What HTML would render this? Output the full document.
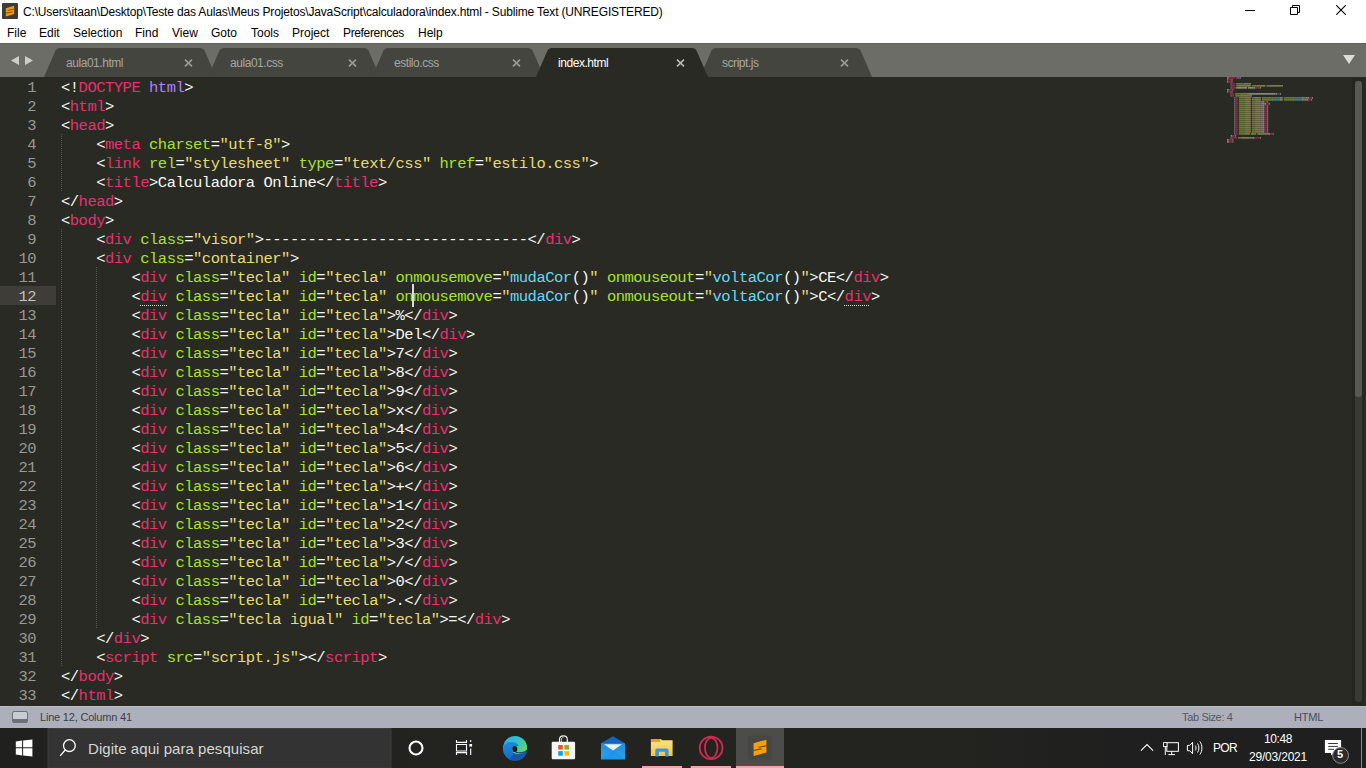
<!DOCTYPE html>
<html><head><meta charset="utf-8">
<style>
*{margin:0;padding:0;box-sizing:border-box}
html,body{width:1366px;height:768px;overflow:hidden;background:#fff;font-family:"Liberation Sans",sans-serif}
.abs{position:absolute}
#title{position:absolute;left:0;top:0;width:1366px;height:22px;background:#fff}
#title .txt{position:absolute;left:23px;top:5px;font-size:12px;letter-spacing:-0.165px;color:#000;white-space:nowrap}
#menu{position:absolute;left:0;top:22px;width:1366px;height:21px;background:#fff}
#menu span{position:absolute;top:4px;font-size:12px;color:#000;white-space:nowrap}
#tabbar{position:absolute;left:0;top:43px;width:1366px;height:34px;background:#6d6d68;border-top:1px solid #5f5f5a}
.tab{position:absolute;top:4px;height:29px;width:172px}
.tab svg{position:absolute;left:0;top:0}
.tab .nm{position:absolute;left:22px;top:8px;font-size:12px;letter-spacing:-0.45px;color:#a6a6a0;white-space:nowrap}
.tab .x{position:absolute;left:140px;top:11px}
#editor{position:absolute;left:0;top:77px;width:1366px;height:629px;background:#292a24;overflow:hidden}
#gutter{position:absolute;left:0;top:0;width:56px}
#gutter div{height:19px;line-height:23px;text-align:right;padding-right:20px;font-family:"Liberation Mono",monospace;font-size:15.5px;letter-spacing:-0.5px;color:#999992}
#gutter div.cur{background:#3e3d38;color:#c2c2bc}
#code{position:absolute;left:61px;top:0;font-family:"Liberation Mono",monospace;font-size:15.5px;letter-spacing:-0.5px;color:#f8f8f2;white-space:pre}
.ln{height:19px;line-height:23px}
i{font-style:normal}
.t{color:#e6316e}.a{color:#a6e22e}.s{color:#e6db74}.f{color:#66d9ef}.k{color:#ae81ff}
.guide{position:absolute;width:1px;background-image:linear-gradient(#55564f 50%,transparent 50%);background-size:1px 2px}
#status{position:absolute;left:0;top:706px;width:1366px;height:22px;background:#adafba;border-top:1px solid #babcc2}
#status span{position:absolute;top:4px;font-size:11px;color:#3d3f47;white-space:nowrap}
#taskbar{position:absolute;left:0;top:728px;width:1366px;height:40px;background:linear-gradient(90deg,#20201e 0%,#23241f 35%,#23241f 70%,#1f1f1f 82%)}
#taskbar .lbl{position:absolute;color:#fff;white-space:nowrap}
</style></head><body>
<div id="title">
  <svg class="abs" style="left:2px;top:3px" width="16" height="16" viewBox="0 0 16 16"><rect width="16" height="16" rx="1" fill="#3b3b3b"/><path d="M3.9 5.3L12.2 2.7V11L3.9 13.5Z" fill="#f79a0e"/><path d="M5.6 7.3L12.3 6.1 M3.8 10.1L10.5 8.9" stroke="#6b4a10" stroke-width="0.9"/></svg>
  <div class="txt">C:\Users\itaan\Desktop\Teste das Aulas\Meus Projetos\JavaScript\calculadora\index.html - Sublime Text (UNREGISTERED)</div>
  <svg class="abs" style="left:1245px;top:10px" width="10" height="2"><rect width="10" height="1" fill="#000"/></svg>
  <svg class="abs" style="left:1290px;top:5px" width="10" height="10" viewBox="0 0 10 10"><path d="M0.5 2.5h7v7h-7z M2.5 2.5v-2h7v7h-2" fill="none" stroke="#000" stroke-width="1"/></svg>
  <svg class="abs" style="left:1336px;top:5px" width="10" height="10" viewBox="0 0 10 10"><path d="M0.3 0.3L9.7 9.7M9.7 0.3L0.3 9.7" stroke="#000" stroke-width="1.1"/></svg>
</div>
<div id="menu">
<span style="left:7px">File</span><span style="left:39px">Edit</span><span style="left:73px">Selection</span><span style="left:135px">Find</span><span style="left:172px">View</span><span style="left:211px">Goto</span><span style="left:251px">Tools</span><span style="left:292px">Project</span><span style="left:343px;letter-spacing:-0.35px">Preferences</span><span style="left:418px">Help</span>
</div>
<div id="tabbar">
  <svg class="abs" style="left:11px;top:12px" width="22" height="9" viewBox="0 0 22 9"><path d="M0 4.5L8 0V9Z M14 0L22 4.5L14 9Z" fill="#cfcfca"/></svg>
  <div class="tab" style="left:44px"><svg width="172" height="29" viewBox="0 0 172 29"><path d="M0 29 L11.5 2.5 Q12.6 0 15.5 0 H156.5 Q159.4 0 160.5 2.5 L172 29Z" fill="#45453f"/></svg><div class="nm" style="color:#a6a6a0">aula01.html</div><svg class="x" width="9" height="8" viewBox="0 0 9 8"><path d="M1 0.6L8 7.4M8 0.6L1 7.4" stroke="#9c9c96" stroke-width="1.6"/></svg></div>
<div class="tab" style="left:208px"><svg width="172" height="29" viewBox="0 0 172 29"><path d="M0 29 L11.5 2.5 Q12.6 0 15.5 0 H156.5 Q159.4 0 160.5 2.5 L172 29Z" fill="#45453f"/></svg><div class="nm" style="color:#a6a6a0">aula01.css</div><svg class="x" width="9" height="8" viewBox="0 0 9 8"><path d="M1 0.6L8 7.4M8 0.6L1 7.4" stroke="#9c9c96" stroke-width="1.6"/></svg></div>
<div class="tab" style="left:372px"><svg width="172" height="29" viewBox="0 0 172 29"><path d="M0 29 L11.5 2.5 Q12.6 0 15.5 0 H156.5 Q159.4 0 160.5 2.5 L172 29Z" fill="#45453f"/></svg><div class="nm" style="color:#a6a6a0">estilo.css</div><svg class="x" width="9" height="8" viewBox="0 0 9 8"><path d="M1 0.6L8 7.4M8 0.6L1 7.4" stroke="#9c9c96" stroke-width="1.6"/></svg></div>
<div class="tab" style="left:700px"><svg width="172" height="29" viewBox="0 0 172 29"><path d="M0 29 L11.5 2.5 Q12.6 0 15.5 0 H156.5 Q159.4 0 160.5 2.5 L172 29Z" fill="#45453f"/></svg><div class="nm" style="color:#a6a6a0">script.js</div><svg class="x" width="9" height="8" viewBox="0 0 9 8"><path d="M1 0.6L8 7.4M8 0.6L1 7.4" stroke="#9c9c96" stroke-width="1.6"/></svg></div>
<div class="tab" style="left:536px"><svg width="172" height="29" viewBox="0 0 172 29"><path d="M0 29 L11.5 2.5 Q12.6 0 15.5 0 H156.5 Q159.4 0 160.5 2.5 L172 29Z" fill="#292a24"/></svg><div class="nm" style="color:#ffffff">index.html</div><svg class="x" width="9" height="8" viewBox="0 0 9 8"><path d="M1 0.6L8 7.4M8 0.6L1 7.4" stroke="#b9b9b3" stroke-width="1.6"/></svg></div>
  <svg class="abs" style="left:1343px;top:11px" width="12" height="9" viewBox="0 0 12 9"><path d="M0 0H12L6 9Z" fill="#dcdcd8"/></svg>
</div>
<div id="editor">
  <div id="gutter"><div>1</div><div>2</div><div>3</div><div>4</div><div>5</div><div>6</div><div>7</div><div>8</div><div>9</div><div>10</div><div>11</div><div class="cur">12</div><div>13</div><div>14</div><div>15</div><div>16</div><div>17</div><div>18</div><div>19</div><div>20</div><div>21</div><div>22</div><div>23</div><div>24</div><div>25</div><div>26</div><div>27</div><div>28</div><div>29</div><div>30</div><div>31</div><div>32</div><div>33</div></div>
  <div class="guide" style="left:61px;top:57px;height:57px"></div><div class="guide" style="left:61px;top:152px;height:437px"></div><div class="guide" style="left:96px;top:190px;height:361px"></div>
  <div id="code"><div class="ln">&lt;!<i class="t">DOCTYPE</i> <i class="k">html</i>&gt;</div><div class="ln">&lt;<i class="t">html</i>&gt;</div><div class="ln">&lt;<i class="t">head</i>&gt;</div><div class="ln">    &lt;<i class="t">meta</i> <i class="a">charset</i>=<i class="s">"utf-8"</i>&gt;</div><div class="ln">    &lt;<i class="t">link</i> <i class="a">rel</i>=<i class="s">"stylesheet"</i> <i class="a">type</i>=<i class="s">"text/css"</i> <i class="a">href</i>=<i class="s">"estilo.css"</i>&gt;</div><div class="ln">    &lt;<i class="t">title</i>&gt;Calculadora Online&lt;/<i class="t">title</i>&gt;</div><div class="ln">&lt;/<i class="t">head</i>&gt;</div><div class="ln">&lt;<i class="t">body</i>&gt;</div><div class="ln">    &lt;<i class="t">div</i> <i class="a">class</i>=<i class="s">"visor"</i>&gt;------------------------------&lt;/<i class="t">div</i>&gt;</div><div class="ln">    &lt;<i class="t">div</i> <i class="a">class</i>=<i class="s">"container"</i>&gt;</div><div class="ln">        &lt;<i class="t">div</i> <i class="a">class</i>=<i class="s">"tecla"</i> <i class="a">id</i>=<i class="s">"tecla"</i> <i class="a">onmousemove</i>=<i class="s">"</i><i class="f">mudaCor</i>()<i class="s">"</i> <i class="a">onmouseout</i>=<i class="s">"</i><i class="f">voltaCor</i>()<i class="s">"</i>&gt;CE&lt;/<i class="t">div</i>&gt;</div><div class="ln">        &lt;<i class="t">div</i> <i class="a">class</i>=<i class="s">"tecla"</i> <i class="a">id</i>=<i class="s">"tecla"</i> <i class="a">onmousemove</i>=<i class="s">"</i><i class="f">mudaCor</i>()<i class="s">"</i> <i class="a">onmouseout</i>=<i class="s">"</i><i class="f">voltaCor</i>()<i class="s">"</i>&gt;C&lt;/<i class="t">div</i>&gt;</div><div class="ln">        &lt;<i class="t">div</i> <i class="a">class</i>=<i class="s">"tecla"</i> <i class="a">id</i>=<i class="s">"tecla"</i>&gt;%&lt;/<i class="t">div</i>&gt;</div><div class="ln">        &lt;<i class="t">div</i> <i class="a">class</i>=<i class="s">"tecla"</i> <i class="a">id</i>=<i class="s">"tecla"</i>&gt;Del&lt;/<i class="t">div</i>&gt;</div><div class="ln">        &lt;<i class="t">div</i> <i class="a">class</i>=<i class="s">"tecla"</i> <i class="a">id</i>=<i class="s">"tecla"</i>&gt;7&lt;/<i class="t">div</i>&gt;</div><div class="ln">        &lt;<i class="t">div</i> <i class="a">class</i>=<i class="s">"tecla"</i> <i class="a">id</i>=<i class="s">"tecla"</i>&gt;8&lt;/<i class="t">div</i>&gt;</div><div class="ln">        &lt;<i class="t">div</i> <i class="a">class</i>=<i class="s">"tecla"</i> <i class="a">id</i>=<i class="s">"tecla"</i>&gt;9&lt;/<i class="t">div</i>&gt;</div><div class="ln">        &lt;<i class="t">div</i> <i class="a">class</i>=<i class="s">"tecla"</i> <i class="a">id</i>=<i class="s">"tecla"</i>&gt;x&lt;/<i class="t">div</i>&gt;</div><div class="ln">        &lt;<i class="t">div</i> <i class="a">class</i>=<i class="s">"tecla"</i> <i class="a">id</i>=<i class="s">"tecla"</i>&gt;4&lt;/<i class="t">div</i>&gt;</div><div class="ln">        &lt;<i class="t">div</i> <i class="a">class</i>=<i class="s">"tecla"</i> <i class="a">id</i>=<i class="s">"tecla"</i>&gt;5&lt;/<i class="t">div</i>&gt;</div><div class="ln">        &lt;<i class="t">div</i> <i class="a">class</i>=<i class="s">"tecla"</i> <i class="a">id</i>=<i class="s">"tecla"</i>&gt;6&lt;/<i class="t">div</i>&gt;</div><div class="ln">        &lt;<i class="t">div</i> <i class="a">class</i>=<i class="s">"tecla"</i> <i class="a">id</i>=<i class="s">"tecla"</i>&gt;+&lt;/<i class="t">div</i>&gt;</div><div class="ln">        &lt;<i class="t">div</i> <i class="a">class</i>=<i class="s">"tecla"</i> <i class="a">id</i>=<i class="s">"tecla"</i>&gt;1&lt;/<i class="t">div</i>&gt;</div><div class="ln">        &lt;<i class="t">div</i> <i class="a">class</i>=<i class="s">"tecla"</i> <i class="a">id</i>=<i class="s">"tecla"</i>&gt;2&lt;/<i class="t">div</i>&gt;</div><div class="ln">        &lt;<i class="t">div</i> <i class="a">class</i>=<i class="s">"tecla"</i> <i class="a">id</i>=<i class="s">"tecla"</i>&gt;3&lt;/<i class="t">div</i>&gt;</div><div class="ln">        &lt;<i class="t">div</i> <i class="a">class</i>=<i class="s">"tecla"</i> <i class="a">id</i>=<i class="s">"tecla"</i>&gt;/&lt;/<i class="t">div</i>&gt;</div><div class="ln">        &lt;<i class="t">div</i> <i class="a">class</i>=<i class="s">"tecla"</i> <i class="a">id</i>=<i class="s">"tecla"</i>&gt;0&lt;/<i class="t">div</i>&gt;</div><div class="ln">        &lt;<i class="t">div</i> <i class="a">class</i>=<i class="s">"tecla"</i> <i class="a">id</i>=<i class="s">"tecla"</i>&gt;.&lt;/<i class="t">div</i>&gt;</div><div class="ln">        &lt;<i class="t">div</i> <i class="a">class</i>=<i class="s">"tecla igual"</i> <i class="a">id</i>=<i class="s">"tecla"</i>&gt;=&lt;/<i class="t">div</i>&gt;</div><div class="ln">    &lt;/<i class="t">div</i>&gt;</div><div class="ln">    &lt;<i class="t">script</i> <i class="a">src</i>=<i class="s">"script.js"</i>&gt;&lt;/<i class="t">script</i>&gt;</div><div class="ln">&lt;/<i class="t">body</i>&gt;</div><div class="ln">&lt;/<i class="t">html</i>&gt;</div></div>
  <div class="abs" style="left:412px;top:207px;width:2px;height:23px;background:#dcdcd6"></div>
  <div class="abs" style="left:140px;top:228px;width:27px;height:1px;background-image:linear-gradient(90deg,#d8d8d0 50%,transparent 50%);background-size:2px 1px"></div>
  <div class="abs" style="left:844px;top:228px;width:26px;height:1px;background-image:linear-gradient(90deg,#d8d8d0 50%,transparent 50%);background-size:2px 1px"></div>
  <svg id="mini" class="abs" style="left:1227px;top:0.2px;opacity:0.45" width="110" height="70" viewBox="0 0 110 70"><rect x="0.00" y="0" width="1.83" height="1.7" fill="#f8f8f2"/>
<rect x="1.83" y="0" width="6.41" height="1.7" fill="#f92672"/>
<rect x="9.15" y="0" width="3.66" height="1.7" fill="#ae81ff"/>
<rect x="12.81" y="0" width="0.92" height="1.7" fill="#f8f8f2"/>
<rect x="0.00" y="2" width="0.92" height="1.7" fill="#f8f8f2"/>
<rect x="0.92" y="2" width="3.66" height="1.7" fill="#f92672"/>
<rect x="4.58" y="2" width="0.92" height="1.7" fill="#f8f8f2"/>
<rect x="0.00" y="4" width="0.92" height="1.7" fill="#f8f8f2"/>
<rect x="0.92" y="4" width="3.66" height="1.7" fill="#f92672"/>
<rect x="4.58" y="4" width="0.92" height="1.7" fill="#f8f8f2"/>
<rect x="3.66" y="6" width="0.92" height="1.7" fill="#f8f8f2"/>
<rect x="4.58" y="6" width="3.66" height="1.7" fill="#f92672"/>
<rect x="9.15" y="6" width="6.41" height="1.7" fill="#a6e22e"/>
<rect x="15.55" y="6" width="0.92" height="1.7" fill="#f8f8f2"/>
<rect x="16.47" y="6" width="6.41" height="1.7" fill="#e6db74"/>
<rect x="22.88" y="6" width="0.92" height="1.7" fill="#f8f8f2"/>
<rect x="3.66" y="8" width="0.92" height="1.7" fill="#f8f8f2"/>
<rect x="4.58" y="8" width="3.66" height="1.7" fill="#f92672"/>
<rect x="9.15" y="8" width="2.75" height="1.7" fill="#a6e22e"/>
<rect x="11.89" y="8" width="0.92" height="1.7" fill="#f8f8f2"/>
<rect x="12.81" y="8" width="10.98" height="1.7" fill="#e6db74"/>
<rect x="24.71" y="8" width="3.66" height="1.7" fill="#a6e22e"/>
<rect x="28.37" y="8" width="0.92" height="1.7" fill="#f8f8f2"/>
<rect x="29.28" y="8" width="9.15" height="1.7" fill="#e6db74"/>
<rect x="39.34" y="8" width="3.66" height="1.7" fill="#a6e22e"/>
<rect x="43.01" y="8" width="0.92" height="1.7" fill="#f8f8f2"/>
<rect x="43.92" y="8" width="10.98" height="1.7" fill="#e6db74"/>
<rect x="54.90" y="8" width="0.92" height="1.7" fill="#f8f8f2"/>
<rect x="3.66" y="10" width="0.92" height="1.7" fill="#f8f8f2"/>
<rect x="4.58" y="10" width="4.58" height="1.7" fill="#f92672"/>
<rect x="9.15" y="10" width="0.92" height="1.7" fill="#f8f8f2"/>
<rect x="10.07" y="10" width="10.07" height="1.7" fill="#f8f8f2"/>
<rect x="21.05" y="10" width="5.49" height="1.7" fill="#f8f8f2"/>
<rect x="26.54" y="10" width="1.83" height="1.7" fill="#f8f8f2"/>
<rect x="28.37" y="10" width="4.58" height="1.7" fill="#f92672"/>
<rect x="32.94" y="10" width="0.92" height="1.7" fill="#f8f8f2"/>
<rect x="0.00" y="12" width="1.83" height="1.7" fill="#f8f8f2"/>
<rect x="1.83" y="12" width="3.66" height="1.7" fill="#f92672"/>
<rect x="5.49" y="12" width="0.92" height="1.7" fill="#f8f8f2"/>
<rect x="0.00" y="14" width="0.92" height="1.7" fill="#f8f8f2"/>
<rect x="0.92" y="14" width="3.66" height="1.7" fill="#f92672"/>
<rect x="4.58" y="14" width="0.92" height="1.7" fill="#f8f8f2"/>
<rect x="3.66" y="16" width="0.92" height="1.7" fill="#f8f8f2"/>
<rect x="4.58" y="16" width="2.75" height="1.7" fill="#f92672"/>
<rect x="8.23" y="16" width="4.58" height="1.7" fill="#a6e22e"/>
<rect x="12.81" y="16" width="0.92" height="1.7" fill="#f8f8f2"/>
<rect x="13.73" y="16" width="6.41" height="1.7" fill="#e6db74"/>
<rect x="20.13" y="16" width="0.92" height="1.7" fill="#f8f8f2"/>
<rect x="21.05" y="16" width="27.45" height="1.7" fill="#f8f8f2"/>
<rect x="48.50" y="16" width="1.83" height="1.7" fill="#f8f8f2"/>
<rect x="50.33" y="16" width="2.75" height="1.7" fill="#f92672"/>
<rect x="53.07" y="16" width="0.92" height="1.7" fill="#f8f8f2"/>
<rect x="3.66" y="18" width="0.92" height="1.7" fill="#f8f8f2"/>
<rect x="4.58" y="18" width="2.75" height="1.7" fill="#f92672"/>
<rect x="8.23" y="18" width="4.58" height="1.7" fill="#a6e22e"/>
<rect x="12.81" y="18" width="0.92" height="1.7" fill="#f8f8f2"/>
<rect x="13.73" y="18" width="10.07" height="1.7" fill="#e6db74"/>
<rect x="23.79" y="18" width="0.92" height="1.7" fill="#f8f8f2"/>
<rect x="7.32" y="20" width="0.92" height="1.7" fill="#f8f8f2"/>
<rect x="8.23" y="20" width="2.75" height="1.7" fill="#f92672"/>
<rect x="11.89" y="20" width="4.58" height="1.7" fill="#a6e22e"/>
<rect x="16.47" y="20" width="0.92" height="1.7" fill="#f8f8f2"/>
<rect x="17.39" y="20" width="6.41" height="1.7" fill="#e6db74"/>
<rect x="24.71" y="20" width="1.83" height="1.7" fill="#a6e22e"/>
<rect x="26.54" y="20" width="0.92" height="1.7" fill="#f8f8f2"/>
<rect x="27.45" y="20" width="6.41" height="1.7" fill="#e6db74"/>
<rect x="34.77" y="20" width="10.07" height="1.7" fill="#a6e22e"/>
<rect x="44.84" y="20" width="0.92" height="1.7" fill="#f8f8f2"/>
<rect x="45.75" y="20" width="0.92" height="1.7" fill="#e6db74"/>
<rect x="46.66" y="20" width="6.41" height="1.7" fill="#66d9ef"/>
<rect x="53.07" y="20" width="1.83" height="1.7" fill="#f8f8f2"/>
<rect x="54.90" y="20" width="0.92" height="1.7" fill="#e6db74"/>
<rect x="56.73" y="20" width="9.15" height="1.7" fill="#a6e22e"/>
<rect x="65.88" y="20" width="0.92" height="1.7" fill="#f8f8f2"/>
<rect x="66.80" y="20" width="0.92" height="1.7" fill="#e6db74"/>
<rect x="67.71" y="20" width="7.32" height="1.7" fill="#66d9ef"/>
<rect x="75.03" y="20" width="1.83" height="1.7" fill="#f8f8f2"/>
<rect x="76.86" y="20" width="0.92" height="1.7" fill="#e6db74"/>
<rect x="77.78" y="20" width="0.92" height="1.7" fill="#f8f8f2"/>
<rect x="78.69" y="20" width="1.83" height="1.7" fill="#f8f8f2"/>
<rect x="80.52" y="20" width="1.83" height="1.7" fill="#f8f8f2"/>
<rect x="82.35" y="20" width="2.75" height="1.7" fill="#f92672"/>
<rect x="85.09" y="20" width="0.92" height="1.7" fill="#f8f8f2"/>
<rect x="7.32" y="22" width="0.92" height="1.7" fill="#f8f8f2"/>
<rect x="8.23" y="22" width="2.75" height="1.7" fill="#f92672"/>
<rect x="11.89" y="22" width="4.58" height="1.7" fill="#a6e22e"/>
<rect x="16.47" y="22" width="0.92" height="1.7" fill="#f8f8f2"/>
<rect x="17.39" y="22" width="6.41" height="1.7" fill="#e6db74"/>
<rect x="24.71" y="22" width="1.83" height="1.7" fill="#a6e22e"/>
<rect x="26.54" y="22" width="0.92" height="1.7" fill="#f8f8f2"/>
<rect x="27.45" y="22" width="6.41" height="1.7" fill="#e6db74"/>
<rect x="34.77" y="22" width="10.07" height="1.7" fill="#a6e22e"/>
<rect x="44.84" y="22" width="0.92" height="1.7" fill="#f8f8f2"/>
<rect x="45.75" y="22" width="0.92" height="1.7" fill="#e6db74"/>
<rect x="46.66" y="22" width="6.41" height="1.7" fill="#66d9ef"/>
<rect x="53.07" y="22" width="1.83" height="1.7" fill="#f8f8f2"/>
<rect x="54.90" y="22" width="0.92" height="1.7" fill="#e6db74"/>
<rect x="56.73" y="22" width="9.15" height="1.7" fill="#a6e22e"/>
<rect x="65.88" y="22" width="0.92" height="1.7" fill="#f8f8f2"/>
<rect x="66.80" y="22" width="0.92" height="1.7" fill="#e6db74"/>
<rect x="67.71" y="22" width="7.32" height="1.7" fill="#66d9ef"/>
<rect x="75.03" y="22" width="1.83" height="1.7" fill="#f8f8f2"/>
<rect x="76.86" y="22" width="0.92" height="1.7" fill="#e6db74"/>
<rect x="77.78" y="22" width="0.92" height="1.7" fill="#f8f8f2"/>
<rect x="78.69" y="22" width="0.92" height="1.7" fill="#f8f8f2"/>
<rect x="79.61" y="22" width="1.83" height="1.7" fill="#f8f8f2"/>
<rect x="81.44" y="22" width="2.75" height="1.7" fill="#f92672"/>
<rect x="84.18" y="22" width="0.92" height="1.7" fill="#f8f8f2"/>
<rect x="7.32" y="24" width="0.92" height="1.7" fill="#f8f8f2"/>
<rect x="8.23" y="24" width="2.75" height="1.7" fill="#f92672"/>
<rect x="11.89" y="24" width="4.58" height="1.7" fill="#a6e22e"/>
<rect x="16.47" y="24" width="0.92" height="1.7" fill="#f8f8f2"/>
<rect x="17.39" y="24" width="6.41" height="1.7" fill="#e6db74"/>
<rect x="24.71" y="24" width="1.83" height="1.7" fill="#a6e22e"/>
<rect x="26.54" y="24" width="0.92" height="1.7" fill="#f8f8f2"/>
<rect x="27.45" y="24" width="6.41" height="1.7" fill="#e6db74"/>
<rect x="33.86" y="24" width="0.92" height="1.7" fill="#f8f8f2"/>
<rect x="34.77" y="24" width="0.92" height="1.7" fill="#f8f8f2"/>
<rect x="35.69" y="24" width="1.83" height="1.7" fill="#f8f8f2"/>
<rect x="37.52" y="24" width="2.75" height="1.7" fill="#f92672"/>
<rect x="40.26" y="24" width="0.92" height="1.7" fill="#f8f8f2"/>
<rect x="7.32" y="26" width="0.92" height="1.7" fill="#f8f8f2"/>
<rect x="8.23" y="26" width="2.75" height="1.7" fill="#f92672"/>
<rect x="11.89" y="26" width="4.58" height="1.7" fill="#a6e22e"/>
<rect x="16.47" y="26" width="0.92" height="1.7" fill="#f8f8f2"/>
<rect x="17.39" y="26" width="6.41" height="1.7" fill="#e6db74"/>
<rect x="24.71" y="26" width="1.83" height="1.7" fill="#a6e22e"/>
<rect x="26.54" y="26" width="0.92" height="1.7" fill="#f8f8f2"/>
<rect x="27.45" y="26" width="6.41" height="1.7" fill="#e6db74"/>
<rect x="33.86" y="26" width="0.92" height="1.7" fill="#f8f8f2"/>
<rect x="34.77" y="26" width="2.75" height="1.7" fill="#f8f8f2"/>
<rect x="37.52" y="26" width="1.83" height="1.7" fill="#f8f8f2"/>
<rect x="39.34" y="26" width="2.75" height="1.7" fill="#f92672"/>
<rect x="42.09" y="26" width="0.92" height="1.7" fill="#f8f8f2"/>
<rect x="7.32" y="28" width="0.92" height="1.7" fill="#f8f8f2"/>
<rect x="8.23" y="28" width="2.75" height="1.7" fill="#f92672"/>
<rect x="11.89" y="28" width="4.58" height="1.7" fill="#a6e22e"/>
<rect x="16.47" y="28" width="0.92" height="1.7" fill="#f8f8f2"/>
<rect x="17.39" y="28" width="6.41" height="1.7" fill="#e6db74"/>
<rect x="24.71" y="28" width="1.83" height="1.7" fill="#a6e22e"/>
<rect x="26.54" y="28" width="0.92" height="1.7" fill="#f8f8f2"/>
<rect x="27.45" y="28" width="6.41" height="1.7" fill="#e6db74"/>
<rect x="33.86" y="28" width="0.92" height="1.7" fill="#f8f8f2"/>
<rect x="34.77" y="28" width="0.92" height="1.7" fill="#f8f8f2"/>
<rect x="35.69" y="28" width="1.83" height="1.7" fill="#f8f8f2"/>
<rect x="37.52" y="28" width="2.75" height="1.7" fill="#f92672"/>
<rect x="40.26" y="28" width="0.92" height="1.7" fill="#f8f8f2"/>
<rect x="7.32" y="30" width="0.92" height="1.7" fill="#f8f8f2"/>
<rect x="8.23" y="30" width="2.75" height="1.7" fill="#f92672"/>
<rect x="11.89" y="30" width="4.58" height="1.7" fill="#a6e22e"/>
<rect x="16.47" y="30" width="0.92" height="1.7" fill="#f8f8f2"/>
<rect x="17.39" y="30" width="6.41" height="1.7" fill="#e6db74"/>
<rect x="24.71" y="30" width="1.83" height="1.7" fill="#a6e22e"/>
<rect x="26.54" y="30" width="0.92" height="1.7" fill="#f8f8f2"/>
<rect x="27.45" y="30" width="6.41" height="1.7" fill="#e6db74"/>
<rect x="33.86" y="30" width="0.92" height="1.7" fill="#f8f8f2"/>
<rect x="34.77" y="30" width="0.92" height="1.7" fill="#f8f8f2"/>
<rect x="35.69" y="30" width="1.83" height="1.7" fill="#f8f8f2"/>
<rect x="37.52" y="30" width="2.75" height="1.7" fill="#f92672"/>
<rect x="40.26" y="30" width="0.92" height="1.7" fill="#f8f8f2"/>
<rect x="7.32" y="32" width="0.92" height="1.7" fill="#f8f8f2"/>
<rect x="8.23" y="32" width="2.75" height="1.7" fill="#f92672"/>
<rect x="11.89" y="32" width="4.58" height="1.7" fill="#a6e22e"/>
<rect x="16.47" y="32" width="0.92" height="1.7" fill="#f8f8f2"/>
<rect x="17.39" y="32" width="6.41" height="1.7" fill="#e6db74"/>
<rect x="24.71" y="32" width="1.83" height="1.7" fill="#a6e22e"/>
<rect x="26.54" y="32" width="0.92" height="1.7" fill="#f8f8f2"/>
<rect x="27.45" y="32" width="6.41" height="1.7" fill="#e6db74"/>
<rect x="33.86" y="32" width="0.92" height="1.7" fill="#f8f8f2"/>
<rect x="34.77" y="32" width="0.92" height="1.7" fill="#f8f8f2"/>
<rect x="35.69" y="32" width="1.83" height="1.7" fill="#f8f8f2"/>
<rect x="37.52" y="32" width="2.75" height="1.7" fill="#f92672"/>
<rect x="40.26" y="32" width="0.92" height="1.7" fill="#f8f8f2"/>
<rect x="7.32" y="34" width="0.92" height="1.7" fill="#f8f8f2"/>
<rect x="8.23" y="34" width="2.75" height="1.7" fill="#f92672"/>
<rect x="11.89" y="34" width="4.58" height="1.7" fill="#a6e22e"/>
<rect x="16.47" y="34" width="0.92" height="1.7" fill="#f8f8f2"/>
<rect x="17.39" y="34" width="6.41" height="1.7" fill="#e6db74"/>
<rect x="24.71" y="34" width="1.83" height="1.7" fill="#a6e22e"/>
<rect x="26.54" y="34" width="0.92" height="1.7" fill="#f8f8f2"/>
<rect x="27.45" y="34" width="6.41" height="1.7" fill="#e6db74"/>
<rect x="33.86" y="34" width="0.92" height="1.7" fill="#f8f8f2"/>
<rect x="34.77" y="34" width="0.92" height="1.7" fill="#f8f8f2"/>
<rect x="35.69" y="34" width="1.83" height="1.7" fill="#f8f8f2"/>
<rect x="37.52" y="34" width="2.75" height="1.7" fill="#f92672"/>
<rect x="40.26" y="34" width="0.92" height="1.7" fill="#f8f8f2"/>
<rect x="7.32" y="36" width="0.92" height="1.7" fill="#f8f8f2"/>
<rect x="8.23" y="36" width="2.75" height="1.7" fill="#f92672"/>
<rect x="11.89" y="36" width="4.58" height="1.7" fill="#a6e22e"/>
<rect x="16.47" y="36" width="0.92" height="1.7" fill="#f8f8f2"/>
<rect x="17.39" y="36" width="6.41" height="1.7" fill="#e6db74"/>
<rect x="24.71" y="36" width="1.83" height="1.7" fill="#a6e22e"/>
<rect x="26.54" y="36" width="0.92" height="1.7" fill="#f8f8f2"/>
<rect x="27.45" y="36" width="6.41" height="1.7" fill="#e6db74"/>
<rect x="33.86" y="36" width="0.92" height="1.7" fill="#f8f8f2"/>
<rect x="34.77" y="36" width="0.92" height="1.7" fill="#f8f8f2"/>
<rect x="35.69" y="36" width="1.83" height="1.7" fill="#f8f8f2"/>
<rect x="37.52" y="36" width="2.75" height="1.7" fill="#f92672"/>
<rect x="40.26" y="36" width="0.92" height="1.7" fill="#f8f8f2"/>
<rect x="7.32" y="38" width="0.92" height="1.7" fill="#f8f8f2"/>
<rect x="8.23" y="38" width="2.75" height="1.7" fill="#f92672"/>
<rect x="11.89" y="38" width="4.58" height="1.7" fill="#a6e22e"/>
<rect x="16.47" y="38" width="0.92" height="1.7" fill="#f8f8f2"/>
<rect x="17.39" y="38" width="6.41" height="1.7" fill="#e6db74"/>
<rect x="24.71" y="38" width="1.83" height="1.7" fill="#a6e22e"/>
<rect x="26.54" y="38" width="0.92" height="1.7" fill="#f8f8f2"/>
<rect x="27.45" y="38" width="6.41" height="1.7" fill="#e6db74"/>
<rect x="33.86" y="38" width="0.92" height="1.7" fill="#f8f8f2"/>
<rect x="34.77" y="38" width="0.92" height="1.7" fill="#f8f8f2"/>
<rect x="35.69" y="38" width="1.83" height="1.7" fill="#f8f8f2"/>
<rect x="37.52" y="38" width="2.75" height="1.7" fill="#f92672"/>
<rect x="40.26" y="38" width="0.92" height="1.7" fill="#f8f8f2"/>
<rect x="7.32" y="40" width="0.92" height="1.7" fill="#f8f8f2"/>
<rect x="8.23" y="40" width="2.75" height="1.7" fill="#f92672"/>
<rect x="11.89" y="40" width="4.58" height="1.7" fill="#a6e22e"/>
<rect x="16.47" y="40" width="0.92" height="1.7" fill="#f8f8f2"/>
<rect x="17.39" y="40" width="6.41" height="1.7" fill="#e6db74"/>
<rect x="24.71" y="40" width="1.83" height="1.7" fill="#a6e22e"/>
<rect x="26.54" y="40" width="0.92" height="1.7" fill="#f8f8f2"/>
<rect x="27.45" y="40" width="6.41" height="1.7" fill="#e6db74"/>
<rect x="33.86" y="40" width="0.92" height="1.7" fill="#f8f8f2"/>
<rect x="34.77" y="40" width="0.92" height="1.7" fill="#f8f8f2"/>
<rect x="35.69" y="40" width="1.83" height="1.7" fill="#f8f8f2"/>
<rect x="37.52" y="40" width="2.75" height="1.7" fill="#f92672"/>
<rect x="40.26" y="40" width="0.92" height="1.7" fill="#f8f8f2"/>
<rect x="7.32" y="42" width="0.92" height="1.7" fill="#f8f8f2"/>
<rect x="8.23" y="42" width="2.75" height="1.7" fill="#f92672"/>
<rect x="11.89" y="42" width="4.58" height="1.7" fill="#a6e22e"/>
<rect x="16.47" y="42" width="0.92" height="1.7" fill="#f8f8f2"/>
<rect x="17.39" y="42" width="6.41" height="1.7" fill="#e6db74"/>
<rect x="24.71" y="42" width="1.83" height="1.7" fill="#a6e22e"/>
<rect x="26.54" y="42" width="0.92" height="1.7" fill="#f8f8f2"/>
<rect x="27.45" y="42" width="6.41" height="1.7" fill="#e6db74"/>
<rect x="33.86" y="42" width="0.92" height="1.7" fill="#f8f8f2"/>
<rect x="34.77" y="42" width="0.92" height="1.7" fill="#f8f8f2"/>
<rect x="35.69" y="42" width="1.83" height="1.7" fill="#f8f8f2"/>
<rect x="37.52" y="42" width="2.75" height="1.7" fill="#f92672"/>
<rect x="40.26" y="42" width="0.92" height="1.7" fill="#f8f8f2"/>
<rect x="7.32" y="44" width="0.92" height="1.7" fill="#f8f8f2"/>
<rect x="8.23" y="44" width="2.75" height="1.7" fill="#f92672"/>
<rect x="11.89" y="44" width="4.58" height="1.7" fill="#a6e22e"/>
<rect x="16.47" y="44" width="0.92" height="1.7" fill="#f8f8f2"/>
<rect x="17.39" y="44" width="6.41" height="1.7" fill="#e6db74"/>
<rect x="24.71" y="44" width="1.83" height="1.7" fill="#a6e22e"/>
<rect x="26.54" y="44" width="0.92" height="1.7" fill="#f8f8f2"/>
<rect x="27.45" y="44" width="6.41" height="1.7" fill="#e6db74"/>
<rect x="33.86" y="44" width="0.92" height="1.7" fill="#f8f8f2"/>
<rect x="34.77" y="44" width="0.92" height="1.7" fill="#f8f8f2"/>
<rect x="35.69" y="44" width="1.83" height="1.7" fill="#f8f8f2"/>
<rect x="37.52" y="44" width="2.75" height="1.7" fill="#f92672"/>
<rect x="40.26" y="44" width="0.92" height="1.7" fill="#f8f8f2"/>
<rect x="7.32" y="46" width="0.92" height="1.7" fill="#f8f8f2"/>
<rect x="8.23" y="46" width="2.75" height="1.7" fill="#f92672"/>
<rect x="11.89" y="46" width="4.58" height="1.7" fill="#a6e22e"/>
<rect x="16.47" y="46" width="0.92" height="1.7" fill="#f8f8f2"/>
<rect x="17.39" y="46" width="6.41" height="1.7" fill="#e6db74"/>
<rect x="24.71" y="46" width="1.83" height="1.7" fill="#a6e22e"/>
<rect x="26.54" y="46" width="0.92" height="1.7" fill="#f8f8f2"/>
<rect x="27.45" y="46" width="6.41" height="1.7" fill="#e6db74"/>
<rect x="33.86" y="46" width="0.92" height="1.7" fill="#f8f8f2"/>
<rect x="34.77" y="46" width="0.92" height="1.7" fill="#f8f8f2"/>
<rect x="35.69" y="46" width="1.83" height="1.7" fill="#f8f8f2"/>
<rect x="37.52" y="46" width="2.75" height="1.7" fill="#f92672"/>
<rect x="40.26" y="46" width="0.92" height="1.7" fill="#f8f8f2"/>
<rect x="7.32" y="48" width="0.92" height="1.7" fill="#f8f8f2"/>
<rect x="8.23" y="48" width="2.75" height="1.7" fill="#f92672"/>
<rect x="11.89" y="48" width="4.58" height="1.7" fill="#a6e22e"/>
<rect x="16.47" y="48" width="0.92" height="1.7" fill="#f8f8f2"/>
<rect x="17.39" y="48" width="6.41" height="1.7" fill="#e6db74"/>
<rect x="24.71" y="48" width="1.83" height="1.7" fill="#a6e22e"/>
<rect x="26.54" y="48" width="0.92" height="1.7" fill="#f8f8f2"/>
<rect x="27.45" y="48" width="6.41" height="1.7" fill="#e6db74"/>
<rect x="33.86" y="48" width="0.92" height="1.7" fill="#f8f8f2"/>
<rect x="34.77" y="48" width="0.92" height="1.7" fill="#f8f8f2"/>
<rect x="35.69" y="48" width="1.83" height="1.7" fill="#f8f8f2"/>
<rect x="37.52" y="48" width="2.75" height="1.7" fill="#f92672"/>
<rect x="40.26" y="48" width="0.92" height="1.7" fill="#f8f8f2"/>
<rect x="7.32" y="50" width="0.92" height="1.7" fill="#f8f8f2"/>
<rect x="8.23" y="50" width="2.75" height="1.7" fill="#f92672"/>
<rect x="11.89" y="50" width="4.58" height="1.7" fill="#a6e22e"/>
<rect x="16.47" y="50" width="0.92" height="1.7" fill="#f8f8f2"/>
<rect x="17.39" y="50" width="6.41" height="1.7" fill="#e6db74"/>
<rect x="24.71" y="50" width="1.83" height="1.7" fill="#a6e22e"/>
<rect x="26.54" y="50" width="0.92" height="1.7" fill="#f8f8f2"/>
<rect x="27.45" y="50" width="6.41" height="1.7" fill="#e6db74"/>
<rect x="33.86" y="50" width="0.92" height="1.7" fill="#f8f8f2"/>
<rect x="34.77" y="50" width="0.92" height="1.7" fill="#f8f8f2"/>
<rect x="35.69" y="50" width="1.83" height="1.7" fill="#f8f8f2"/>
<rect x="37.52" y="50" width="2.75" height="1.7" fill="#f92672"/>
<rect x="40.26" y="50" width="0.92" height="1.7" fill="#f8f8f2"/>
<rect x="7.32" y="52" width="0.92" height="1.7" fill="#f8f8f2"/>
<rect x="8.23" y="52" width="2.75" height="1.7" fill="#f92672"/>
<rect x="11.89" y="52" width="4.58" height="1.7" fill="#a6e22e"/>
<rect x="16.47" y="52" width="0.92" height="1.7" fill="#f8f8f2"/>
<rect x="17.39" y="52" width="6.41" height="1.7" fill="#e6db74"/>
<rect x="24.71" y="52" width="1.83" height="1.7" fill="#a6e22e"/>
<rect x="26.54" y="52" width="0.92" height="1.7" fill="#f8f8f2"/>
<rect x="27.45" y="52" width="6.41" height="1.7" fill="#e6db74"/>
<rect x="33.86" y="52" width="0.92" height="1.7" fill="#f8f8f2"/>
<rect x="34.77" y="52" width="0.92" height="1.7" fill="#f8f8f2"/>
<rect x="35.69" y="52" width="1.83" height="1.7" fill="#f8f8f2"/>
<rect x="37.52" y="52" width="2.75" height="1.7" fill="#f92672"/>
<rect x="40.26" y="52" width="0.92" height="1.7" fill="#f8f8f2"/>
<rect x="7.32" y="54" width="0.92" height="1.7" fill="#f8f8f2"/>
<rect x="8.23" y="54" width="2.75" height="1.7" fill="#f92672"/>
<rect x="11.89" y="54" width="4.58" height="1.7" fill="#a6e22e"/>
<rect x="16.47" y="54" width="0.92" height="1.7" fill="#f8f8f2"/>
<rect x="17.39" y="54" width="6.41" height="1.7" fill="#e6db74"/>
<rect x="24.71" y="54" width="1.83" height="1.7" fill="#a6e22e"/>
<rect x="26.54" y="54" width="0.92" height="1.7" fill="#f8f8f2"/>
<rect x="27.45" y="54" width="6.41" height="1.7" fill="#e6db74"/>
<rect x="33.86" y="54" width="0.92" height="1.7" fill="#f8f8f2"/>
<rect x="34.77" y="54" width="0.92" height="1.7" fill="#f8f8f2"/>
<rect x="35.69" y="54" width="1.83" height="1.7" fill="#f8f8f2"/>
<rect x="37.52" y="54" width="2.75" height="1.7" fill="#f92672"/>
<rect x="40.26" y="54" width="0.92" height="1.7" fill="#f8f8f2"/>
<rect x="7.32" y="56" width="0.92" height="1.7" fill="#f8f8f2"/>
<rect x="8.23" y="56" width="2.75" height="1.7" fill="#f92672"/>
<rect x="11.89" y="56" width="4.58" height="1.7" fill="#a6e22e"/>
<rect x="16.47" y="56" width="0.92" height="1.7" fill="#f8f8f2"/>
<rect x="17.39" y="56" width="5.49" height="1.7" fill="#e6db74"/>
<rect x="23.79" y="56" width="5.49" height="1.7" fill="#e6db74"/>
<rect x="30.20" y="56" width="1.83" height="1.7" fill="#a6e22e"/>
<rect x="32.02" y="56" width="0.92" height="1.7" fill="#f8f8f2"/>
<rect x="32.94" y="56" width="6.41" height="1.7" fill="#e6db74"/>
<rect x="39.34" y="56" width="0.92" height="1.7" fill="#f8f8f2"/>
<rect x="40.26" y="56" width="0.92" height="1.7" fill="#f8f8f2"/>
<rect x="41.18" y="56" width="1.83" height="1.7" fill="#f8f8f2"/>
<rect x="43.01" y="56" width="2.75" height="1.7" fill="#f92672"/>
<rect x="45.75" y="56" width="0.92" height="1.7" fill="#f8f8f2"/>
<rect x="3.66" y="58" width="1.83" height="1.7" fill="#f8f8f2"/>
<rect x="5.49" y="58" width="2.75" height="1.7" fill="#f92672"/>
<rect x="8.23" y="58" width="0.92" height="1.7" fill="#f8f8f2"/>
<rect x="3.66" y="60" width="0.92" height="1.7" fill="#f8f8f2"/>
<rect x="4.58" y="60" width="5.49" height="1.7" fill="#f92672"/>
<rect x="10.98" y="60" width="2.75" height="1.7" fill="#a6e22e"/>
<rect x="13.73" y="60" width="0.92" height="1.7" fill="#f8f8f2"/>
<rect x="14.64" y="60" width="10.07" height="1.7" fill="#e6db74"/>
<rect x="24.71" y="60" width="0.92" height="1.7" fill="#f8f8f2"/>
<rect x="25.62" y="60" width="1.83" height="1.7" fill="#f8f8f2"/>
<rect x="27.45" y="60" width="5.49" height="1.7" fill="#f92672"/>
<rect x="32.94" y="60" width="0.92" height="1.7" fill="#f8f8f2"/>
<rect x="0.00" y="62" width="1.83" height="1.7" fill="#f8f8f2"/>
<rect x="1.83" y="62" width="3.66" height="1.7" fill="#f92672"/>
<rect x="5.49" y="62" width="0.92" height="1.7" fill="#f8f8f2"/>
<rect x="0.00" y="64" width="1.83" height="1.7" fill="#f8f8f2"/>
<rect x="1.83" y="64" width="3.66" height="1.7" fill="#f92672"/>
<rect x="5.49" y="64" width="0.92" height="1.7" fill="#f8f8f2"/></svg>
  <div class="abs" style="left:1352px;top:1px;width:12px;height:627px;background:#252620"></div>
  <div class="abs" style="left:1355px;top:4px;width:7px;height:621px;background:#393a33;border-radius:3px"></div>
  <div class="abs" style="left:1355px;top:4px;width:7px;height:316px;background:#585953;border-radius:3px"></div>
</div>
<div id="status">
  <svg class="abs" style="left:12px;top:4px" width="16" height="12" viewBox="0 0 16 12"><rect x="0.5" y="0.5" width="15" height="11" rx="1.5" fill="#c9ccd3" stroke="#6e7078"/><rect x="1" y="8" width="14" height="3.5" fill="#6e7078"/></svg>
  <span style="left:40px;letter-spacing:-0.2px">Line 12, Column 41</span>
  <span style="left:1182px;letter-spacing:-0.35px;color:#55575f">Tab Size: 4</span>
  <span style="left:1294px;letter-spacing:-0.2px;color:#4a4c54">HTML</span>
</div>
<div id="taskbar"><svg class="abs" style="left:0;top:0" width="1366" height="40" viewBox="0 728 1366 40">
  <!-- windows logo -->
  <path d="M15.8 741.4L22.1 740.6V747.2H15.8Z M23.1 740.4L32.4 739.4V747.2H23.1Z M15.8 748.2H22.1V755.4L15.8 754.6Z M23.1 748.2H32.4V756.5L23.1 755.5Z" fill="#fff"/>
  <!-- search box -->
  <rect x="48" y="728.5" width="343" height="39.5" fill="#333333" stroke="#3d3d3d" stroke-width="1"/>
  <circle cx="69.4" cy="745.6" r="5.9" fill="none" stroke="#fff" stroke-width="1.3"/>
  <path d="M65.3 749.9L60.6 755.4" stroke="#fff" stroke-width="1.4" stroke-linecap="round"/>
  <!-- cortana -->
  <circle cx="416" cy="748" r="6.5" fill="none" stroke="#fff" stroke-width="2.1"/>
  <!-- task view -->
  <path d="M456.5 740V742.4H466.5V740 M456.5 755V752.6H466.5V755 M456.5 744.5H466.5V751H456.5Z M470.7 740V742 M470.7 748.5V755" fill="none" stroke="#fff" stroke-width="1.1"/>
  <rect x="469.4" y="744" width="2.7" height="2.6" fill="#fff"/>
  <!-- edge -->
  <defs>
    <linearGradient id="eg1" x1="0.1" y1="0.2" x2="0.9" y2="0.7"><stop offset="0" stop-color="#2cb6f0"/><stop offset="0.5" stop-color="#34c4c0"/><stop offset="1" stop-color="#66d86a"/></linearGradient>
    <linearGradient id="eg2" x1="0" y1="0" x2="0.4" y2="1"><stop offset="0" stop-color="#1c8fe2"/><stop offset="1" stop-color="#1565c4"/></linearGradient>
    <linearGradient id="fg" x1="0" y1="0" x2="0" y2="1"><stop offset="0" stop-color="#fde28a"/><stop offset="1" stop-color="#f5c542"/></linearGradient>
    <linearGradient id="mg" x1="0" y1="0" x2="0" y2="1"><stop offset="0" stop-color="#1f8ee0"/><stop offset="1" stop-color="#2aa3ef"/></linearGradient>
  </defs>
  <circle cx="515.1" cy="748" r="12" fill="url(#eg1)"/>
  <path d="M503.2 747 C504 743.5 508 741.8 512 742 C515.5 742.2 518 744 518.8 746 L516.5 746 C513.5 745.5 511.5 748 512 750.5 C512.6 753.5 517 754.5 521 753.6 C523.5 753 525.5 752 527.1 750.5 A12 12 0 0 1 503.2 747Z" fill="url(#eg2)"/>
  <path d="M514 753.6 C518 755 523 754.2 527.1 750.6 A12 12 0 0 1 510 758.9 C511.5 757 512.5 755 514 753.6Z" fill="#1655aa"/>
  <ellipse cx="514.8" cy="749" rx="2.5" ry="3.1" fill="#1d1e1e"/>
  <path d="M515.5 752.2 C519 753.4 523.5 753 527.1 750.4" fill="none" stroke="#12305a" stroke-width="1"/>
  <!-- store -->
  <path d="M559.5 742V739.5C559.5 737 561 735.8 563.4 735.8C565.8 735.8 567.3 737 567.3 739.5V742" fill="none" stroke="#f4f4f4" stroke-width="1.2"/>
  <path d="M561.3 742V740C561.3 738.2 562 737.6 563.4 737.6" fill="none" stroke="#f4f4f4" stroke-width="0.8"/>
  <rect x="551.7" y="741.7" width="23.4" height="17.6" rx="1.2" fill="#f7f7f7"/>
  <rect x="558.2" y="745" width="4.6" height="4.6" fill="#f25022"/>
  <rect x="564.4" y="745" width="4.6" height="4.6" fill="#7fba00"/>
  <rect x="558.2" y="751.1" width="4.6" height="4.6" fill="#00a4ef"/>
  <rect x="564.4" y="751.1" width="4.6" height="4.6" fill="#ffb900"/>
  <!-- mail -->
  <path d="M601 743.3L613 736.2L625 743.3V759.3H601Z" fill="#1565c0"/>
  <path d="M601 743.3H625V759.3H601Z" fill="url(#mg)"/>
  <path d="M604 744.2H622L613 750.4Z" fill="#eef2f6"/>
  <path d="M601 759.3L613 750.5L625 759.3Z" fill="#1e90e6" opacity="0.6"/>
  <!-- explorer -->
  <path d="M650.9 739H660.8L662.2 740.3H672.6V756H650.9Z" fill="url(#fg)"/>
  <rect x="650.9" y="739" width="9.4" height="2.9" fill="#e0a800"/>
  <path d="M655.3 756.6V750.8C655.3 749.4 656 748.6 657.5 748.6H666.4C667.9 748.6 668.6 749.4 668.6 750.8V756.6H665V751.7H658.9V756.6Z" fill="#3a96dd"/>
  <!-- opera -->
  <ellipse cx="711.1" cy="747.9" rx="11.4" ry="11.2" fill="none" stroke="#cf2a4f" stroke-width="1.8"/>
  <ellipse cx="711.2" cy="747.8" rx="6.3" ry="10" fill="none" stroke="#cf2a4f" stroke-width="1.8"/>
  <!-- sublime active -->
  <rect x="736" y="728" width="48" height="40" fill="#4c4c49"/>
  <rect x="748" y="735.8" width="23.8" height="23.7" fill="#464644"/>
  <path d="M753.6 743.2L766.4 739.7V752.5L753.6 756.1Z" fill="#f99f0c"/><path d="M758.5 747.3L766.5 745.7 M753.5 750.5L761.5 748.9" stroke="#6e4a0c" stroke-width="1.1"/>
  <!-- running indicators -->
  <rect x="642" y="766" width="40" height="2" fill="#f4a3a8"/>
  <rect x="690.7" y="766" width="40.3" height="2" fill="#f4a3a8"/>
  <rect x="736" y="766" width="48" height="2" fill="#f4a3a8"/>
  <!-- tray -->
  <path d="M1140.9 750.6L1147 744.6L1153.1 750.6" fill="none" stroke="#fff" stroke-width="1.1"/>
  <rect x="1166.8" y="742.7" width="11.6" height="8.6" fill="none" stroke="#fff" stroke-width="1"/>
  <path d="M1171.7 751.3V754.4 M1168.4 754.6H1175" stroke="#fff" stroke-width="1"/>
  <rect x="1163.6" y="742.6" width="3.4" height="4" fill="#1f1f1e" stroke="#fff" stroke-width="0.9"/>
  <path d="M1165.3 746.6V755" stroke="#fff" stroke-width="1"/>
  <path d="M1187.4 745.4H1189.7L1192.6 742.3V753.7L1189.7 750.7H1187.4Z" fill="none" stroke="#fff" stroke-width="1"/>
  <path d="M1195.2 745.5C1196.3 746.8 1196.3 749.2 1195.2 750.5 M1197.5 743.5C1199.4 745.8 1199.4 750.2 1197.5 752.5 M1199.8 741.4C1202.6 744.8 1202.6 751.2 1199.8 754.6" fill="none" stroke="#fff" stroke-width="1"/>
  <!-- notifications -->
  <path d="M1324.9 740H1341.1V752.9H1333.5L1331 755.4V752.9H1324.9Z" fill="#fff"/>
  <path d="M1328.2 743.5H1337.8 M1328.2 746.4H1337.8 M1328.2 749.3H1334" stroke="#1f1f1e" stroke-width="0.9"/>
  <circle cx="1340.6" cy="755.4" r="7.9" fill="#2b2b2b" stroke="#9a9a9a" stroke-width="0.9"/>
  <rect x="1361" y="728" width="1" height="40" fill="#8a8a8a"/>
</svg>
<div class="lbl" style="left:88px;top:12px;font-size:15px;color:#d6d6d6;letter-spacing:0.05px">Digite aqui para pesquisar</div>
<div class="lbl" style="left:1213px;top:13px;font-size:12px;letter-spacing:-0.7px">POR</div>
<div class="lbl" style="left:1264px;top:4px;font-size:12px;letter-spacing:-0.4px">10:48</div>
<div class="lbl" style="left:1249px;top:22px;font-size:12px;letter-spacing:-0.2px">29/03/2021</div>
<div class="lbl" style="left:1337px;top:20px;font-size:11px;font-weight:bold">5</div>
</div>
</body></html>
